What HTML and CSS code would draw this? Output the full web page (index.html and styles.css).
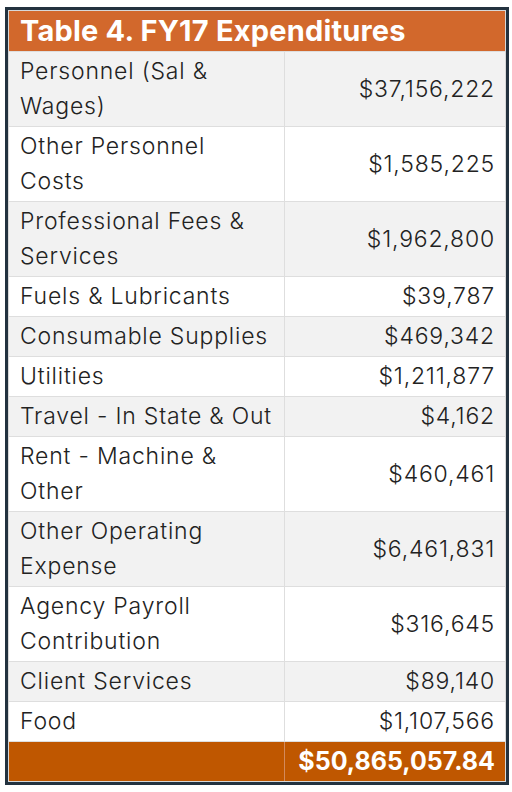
FILE: index.html
```html
<!DOCTYPE html>
<html lang="en">
<head>
    <meta charset="UTF-8">
    <meta name="viewport" content="width=device-width, initial-scale=1.0">
    <title>Table 4. FY17 Expenditures</title>
    <link rel="stylesheet" href="styles.css">
</head>
<body>
    <div class="frame">
        <table class="expenses">
            <colgroup>
                <col class="col-label">
                <col class="col-amount">
            </colgroup>
            <thead>
                <tr>
                    <th colspan="2">Table 4. FY17 Expenditures</th>
                </tr>
            </thead>
            <tbody>
                <tr><td>Personnel (Sal &amp; Wages)</td><td class="amount">$37,156,222</td></tr>
                <tr><td>Other Personnel Costs</td><td class="amount">$1,585,225</td></tr>
                <tr><td>Professional Fees &amp; Services</td><td class="amount">$1,962,800</td></tr>
                <tr><td>Fuels &amp; Lubricants</td><td class="amount">$39,787</td></tr>
                <tr><td>Consumable Supplies</td><td class="amount">$469,342</td></tr>
                <tr><td>Utilities</td><td class="amount">$1,211,877</td></tr>
                <tr><td>Travel - In State &amp; Out</td><td class="amount">$4,162</td></tr>
                <tr><td>Rent - Machine &amp; Other</td><td class="amount">$460,461</td></tr>
                <tr><td>Other Operating Expense</td><td class="amount">$6,461,831</td></tr>
                <tr><td>Agency Payroll Contribution</td><td class="amount">$316,645</td></tr>
                <tr><td>Client Services</td><td class="amount">$89,140</td></tr>
                <tr><td>Food</td><td class="amount">$1,107,566</td></tr>
            </tbody>
            <tfoot>
                <tr><td></td><td class="amount">$50,865,057.84</td></tr>
            </tfoot>
        </table>
    </div>
</body>
</html>
```

FILE: styles.css
```css
body {
    margin: 0;
    padding: 7px 5px;
    background: #fff;
    font-family: Inter, 'Liberation Sans', sans-serif;
    color: #222;
}

.frame {
    width: 496px;
    border: 3px solid #23323f;
    padding: 1px;
    background: #d8d8d8;
}

.expenses {
    width: 100%;
    border-collapse: collapse;
    table-layout: fixed;
    font-size: 23px;
    font-weight: 300;
    letter-spacing: 0.8px;
    line-height: 35px;
}

.col-label {
    width: 275px;
}

th {
    background: #d2682c;
    color: #fff;
    font-weight: 700;
    font-size: 29px;
    letter-spacing: 0.2px;
    text-align: left;
    padding: 0 11px;
    height: 40px;
    line-height: 38px;
}

td {
    padding: 2px 10px 2px 11px;
    border: 1px solid #dedede;
    vertical-align: middle;
}

td:first-child {
    border-left: none;
}

td:last-child {
    border-right: none;
}

tbody tr:nth-child(odd) td {
    background: #f2f2f2;
}

tbody tr:nth-child(even) td {
    background: #fff;
}

.amount {
    text-align: right;
}

tfoot td {
    background: #bf5700;
    color: #fff;
    font-weight: 700;
    font-size: 25px;
    letter-spacing: 0;
    height: 35px;
    border-color: #d38a5c;
    border-bottom: none;
}
```
